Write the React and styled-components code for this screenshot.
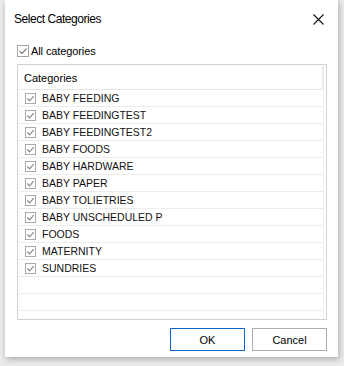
import React from "react";
import styled, { createGlobalStyle } from "styled-components";

const Global = createGlobalStyle`
  html, body {
    margin: 0;
    padding: 0;
    background: #ebebeb;
    width: 344px;
    height: 366px;
    overflow: hidden;
  }
`;

const Window = styled.div`
  margin-left: 5px;
  width: 333px;
  height: 357px;
  background: #ffffff;
  box-shadow: 1px 2px 6px rgba(0, 0, 0, 0.28);
  display: flex;
  flex-direction: column;
  font-family: "Liberation Sans", Arial, sans-serif;
  color: #000;
`;

const TitleBar = styled.div`
  height: 38px;
  display: flex;
  align-items: center;
  justify-content: space-between;
  padding: 0 14px 0 9px;
`;

const Title = styled.div`
  font-size: 12px;
  letter-spacing: -0.45px;
`;

const Body = styled.div`
  padding: 0 11px 0 12px;
  display: flex;
  flex-direction: column;
`;

const AllRow = styled.label`
  height: 26px;
  display: flex;
  align-items: center;
  gap: 2px;
  font-size: 11px;
  letter-spacing: -0.1px;
`;

const ListBox = styled.div`
  height: 252px;
  border: 1px solid #d2d2d2;
  padding: 1px 2px 1px 1px;
  overflow: hidden;
  display: flex;
  flex-direction: column;
`;

const Header = styled.div`
  height: 24px;
  flex-shrink: 0;
  box-sizing: border-box;
  display: flex;
  align-items: center;
  padding-left: 5px;
  font-size: 11px;
  border-bottom: 1px solid #e5e5e5;
  border-right: 2px solid #ececec;
`;

const Row = styled.div`
  height: 17px;
  flex-shrink: 0;
  box-sizing: border-box;
  border-bottom: 1px solid #ececec;
  border-right: 1px solid #f0f0f0;
  display: flex;
  align-items: center;
  padding-left: 6px;
  gap: 6px;
  font-size: 10.5px;
  color: #111;
`;

const Footer = styled.div`
  display: flex;
  justify-content: flex-end;
  gap: 7px;
  padding: 8px 11px 0 0;
`;

const Button = styled.button`
  width: 75px;
  height: 23px;
  box-sizing: border-box;
  background: #ffffff;
  border: 1px solid ${(p) => (p.$primary ? "#0a64c8" : "#adadad")};
  font-family: "Liberation Sans", Arial, sans-serif;
  font-size: 11px;
  color: #000;
  padding: 0;
`;

const Check = ({ size = 12 }) => (
  <svg width={size} height={size} viewBox="0 0 12 12">
    <rect x="0.5" y="0.5" width="11" height="11" fill="#fff" stroke="#a3a3a3" />
    <path d="M2.5 6 L5 8.5 L9.5 3.5" fill="none" stroke="#8a8a8a" strokeWidth="1.3" />
  </svg>
);

const Close = () => (
  <svg width="11" height="11" viewBox="0 0 11 11">
    <path d="M0.5 0.5 L10.5 10.5 M10.5 0.5 L0.5 10.5" stroke="#111" strokeWidth="1.1" />
  </svg>
);

const categories = [
  "BABY FEEDING",
  "BABY FEEDINGTEST",
  "BABY FEEDINGTEST2",
  "BABY FOODS",
  "BABY HARDWARE",
  "BABY PAPER",
  "BABY TOLIETRIES",
  "BABY UNSCHEDULED P",
  "FOODS",
  "MATERNITY",
  "SUNDRIES",
];

const App = () => {
  return (
    <>
      <Global />
      <Window>
        <TitleBar>
          <Title>Select Categories</Title>
          <Close />
        </TitleBar>
        <Body>
          <AllRow>
            <Check />
            All categories
          </AllRow>
          <ListBox>
            <Header>Categories</Header>
            {categories.map((c) => (
              <Row key={c}>
                <Check size={11} />
                {c}
              </Row>
            ))}
            <Row />
            <Row />
            <Row />
          </ListBox>
        </Body>
        <Footer>
          <Button $primary>OK</Button>
          <Button>Cancel</Button>
        </Footer>
      </Window>
    </>
  );
};

export default App;
